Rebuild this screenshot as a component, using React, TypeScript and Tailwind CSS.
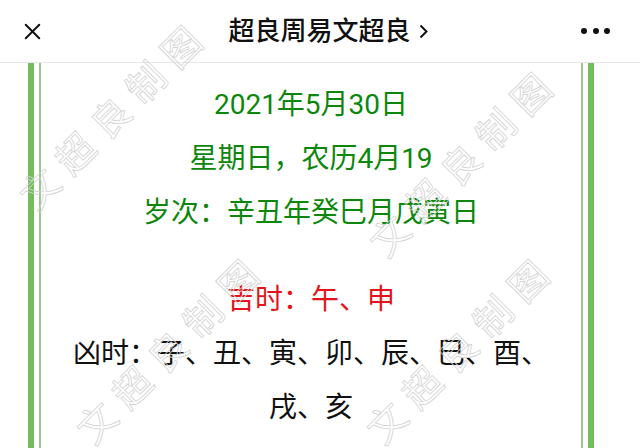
import { X } from 'lucide-react';

const marks = [
  { x: 116, y: 115 },
  { x: 466, y: 162 },
  { x: 173, y: 349 },
  { x: 463, y: 349 },
];

const Watermark = ({ x, y }: { x: number; y: number }) => (
  <span
    className="pointer-events-none absolute whitespace-nowrap -translate-x-1/2 -translate-y-1/2 -rotate-[45deg] text-[38px] font-normal tracking-[12px] text-transparent [-webkit-text-stroke:0.8px_#d2d2d2]"
    style={{ left: x, top: y }}
  >
    文超良制图
  </span>
);

export default function App() {
  return (
    <div className="relative w-[640px] h-[448px] overflow-hidden bg-white font-['Roboto','Noto_Sans_CJK_SC',sans-serif]">
      {/* top bar */}
      <header className="grid h-[63px] grid-cols-[64px_1fr_64px] items-center border-b border-[#e8e8e8]">
        <div className="pl-[19px]">
          <X size={27} strokeWidth={1.8} className="text-[#111]" />
        </div>
        <div className="flex items-center justify-center gap-[8px] pl-[16px] text-[26px] font-medium text-[#111]">
          <span>超良周易文超良</span>
          <svg width="9" height="15" viewBox="0 0 9 15" fill="none">
            <path d="M1.5 1.5 7.5 7.5 1.5 13.5" stroke="#111" strokeWidth="2" />
          </svg>
        </div>
        <div className="flex items-center gap-[5.5px] pl-[5px]">
          <span className="h-[6px] w-[6px] rounded-full bg-[#111]" />
          <span className="h-[6px] w-[6px] rounded-full bg-[#111]" />
          <span className="h-[6px] w-[6px] rounded-full bg-[#111]" />
        </div>
      </header>

      {/* framed content */}
      <div className="flex h-[385px]">
        <div className="ml-[28px] w-[6px] bg-[#74bd5e]" />
        <div className="ml-[5px] w-[2px] bg-[#9cc48c]" />
        <div className="flex-1 px-[24px] pt-[15px] text-center text-[28px] leading-[54px]">
          <div className="text-[#0c870c]">
            <p>2021年5月30日</p>
            <p>星期日，农历4月19</p>
            <p>岁次：辛丑年癸巳月戊寅日</p>
          </div>
          <p className="mt-[33px] text-[#e3141b]">吉时：午、申</p>
          <p className="text-[#111]">凶时：子、丑、寅、卯、辰、巳、酉、戌、亥</p>
        </div>
        <div className="w-[2px] bg-[#9cc48c]" />
        <div className="ml-[5px] mr-[46px] w-[6px] bg-[#74bd5e]" />
      </div>

      {marks.map((m, i) => (
        <Watermark key={i} x={m.x} y={m.y} />
      ))}
    </div>
  );
}
